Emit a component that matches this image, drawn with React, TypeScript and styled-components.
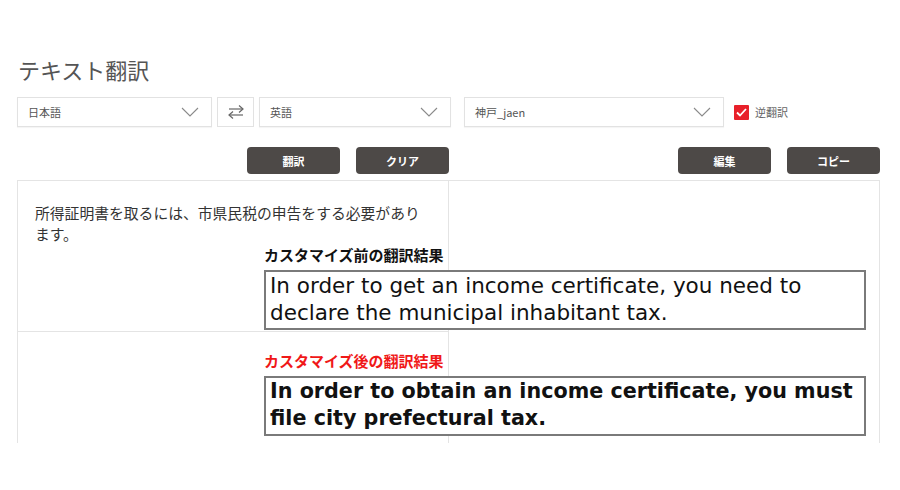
import React from 'react'
import styled, { createGlobalStyle } from 'styled-components'

const GlobalStyle = createGlobalStyle`
  body {
    margin: 0;
    background: #ffffff;
    font-family: "Noto Sans CJK JP", "Noto Sans", sans-serif;
    overflow: hidden;
  }
`

function Chevron() {
  return (
    <svg width="18" height="10" viewBox="0 0 18 10">
      <polyline points="1,1 9,9 17,1" fill="none" stroke="#8a8a8a" strokeWidth="1.1" />
    </svg>
  )
}

function SwapIcon() {
  return (
    <svg width="18" height="16" viewBox="0 0 18 16">
      <g fill="none" stroke="#666" strokeWidth="1.2">
        <line x1="2" y1="5" x2="16" y2="5" />
        <polyline points="12,1.5 16,5 12,8.5" />
        <line x1="2" y1="11" x2="16" y2="11" />
        <polyline points="6,7.5 2,11 6,14.5" />
      </g>
    </svg>
  )
}

function App() {
  return (
    <Page>
      <GlobalStyle />
      <Title>テキスト翻訳</Title>
      <Toolbar>
        <Select width={195}>
          <span>日本語</span>
          <Chevron />
        </Select>
        <SwapButton>
          <SwapIcon />
        </SwapButton>
        <Select width={192}>
          <span>英語</span>
          <Chevron />
        </Select>
        <Select width={260} spaced>
          <span>神戸_jaen</span>
          <Chevron />
        </Select>
        <CheckLabel>
          <CheckBox>
            <svg width="11" height="9" viewBox="0 0 11 9">
              <polyline points="1,4.5 4,7.5 10,1" fill="none" stroke="#fff" strokeWidth="1.8" />
            </svg>
          </CheckBox>
          逆翻訳
        </CheckLabel>
      </Toolbar>
      <ActionRow>
        <ButtonGroup>
          <ActionButton>翻訳</ActionButton>
          <ActionButton>クリア</ActionButton>
        </ButtonGroup>
        <ButtonGroup>
          <ActionButton>編集</ActionButton>
          <ActionButton>コピー</ActionButton>
        </ButtonGroup>
      </ActionRow>
      <Panel>
        <SourceColumn>
          <SourceCell>
            <SourceText>所得証明書を取るには、市県民税の申告をする必要があります。</SourceText>
          </SourceCell>
          <EmptyCell />
        </SourceColumn>
        <TargetColumn />
        <Callouts>
          <CalloutLabel>カスタマイズ前の翻訳結果</CalloutLabel>
          <CalloutBox>
            In order to get an income certificate, you need to declare the municipal inhabitant tax.
          </CalloutBox>
          <CalloutLabel red>カスタマイズ後の翻訳結果</CalloutLabel>
          <CalloutBox bold>
            In order to obtain an income certificate, you must file city prefectural tax.
          </CalloutBox>
        </Callouts>
      </Panel>
    </Page>
  )
}

const Page = styled.div`
  width: 863px;
  padding: 56px 20px 0 17px;
`

const Title = styled.h1`
  margin: 0 0 15px 1px;
  font-size: 22px;
  font-weight: 400;
  line-height: 26px;
  color: #555;
`

const Toolbar = styled.div`
  display: flex;
  align-items: center;
  gap: 5px;
  height: 30px;
`

const Select = styled.div<{ width: number; spaced?: boolean }>`
  display: flex;
  align-items: center;
  justify-content: space-between;
  box-sizing: border-box;
  width: ${(p) => p.width}px;
  height: 30px;
  padding: 0 12px 0 10px;
  margin-left: ${(p) => (p.spaced ? '8px' : '0')};
  border: 1px solid #e2e2e2;
  box-shadow: 0 1px 1px rgba(0, 0, 0, 0.04);
  font-size: 11px;
  color: #555;
`

const SwapButton = styled.div`
  display: flex;
  align-items: center;
  justify-content: center;
  box-sizing: border-box;
  width: 37px;
  height: 30px;
  border: 1px solid #e2e2e2;
`

const CheckLabel = styled.label`
  display: flex;
  align-items: center;
  gap: 6px;
  margin-left: 5px;
  font-size: 11px;
  color: #666;
`

const CheckBox = styled.span`
  display: flex;
  align-items: center;
  justify-content: center;
  width: 15px;
  height: 15px;
  background: #e8202a;
  border-radius: 1px;
`

const ActionRow = styled.div`
  display: grid;
  grid-template-columns: 432px 431px;
  margin-top: 20px;
  height: 27px;
`

const ButtonGroup = styled.div`
  display: flex;
  justify-content: flex-end;
  gap: 16px;
`

const ActionButton = styled.button`
  width: 93px;
  height: 27px;
  border: none;
  border-radius: 4px;
  background: #4d4947;
  color: #fff;
  font-family: "Noto Sans CJK JP", sans-serif;
  font-size: 11px;
  font-weight: 700;
  padding: 0;
`

const Panel = styled.div`
  position: relative;
  display: grid;
  grid-template-columns: 432px 431px;
  margin-top: 6px;
  height: 263px;
`

const SourceColumn = styled.div`
  display: flex;
  flex-direction: column;
  border-top: 1px solid #e4e4e4;
  border-left: 1px solid #e4e4e4;
  border-right: 1px solid #e4e4e4;
`

const SourceCell = styled.div`
  height: 151px;
  padding: 21px 0 0 17px;
  box-sizing: border-box;
  border-bottom: 1px solid #e4e4e4;
`

const SourceText = styled.p`
  margin: 0;
  width: 396px;
  font-size: 14.8px;
  line-height: 21px;
  color: #333;
`

const EmptyCell = styled.div`
  flex: 1;
`

const TargetColumn = styled.div`
  border-top: 1px solid #e4e4e4;
  border-right: 1px solid #e4e4e4;
`

const Callouts = styled.div`
  position: absolute;
  left: 247px;
  top: 65px;
  width: 602px;
  display: flex;
  flex-direction: column;
`

const CalloutLabel = styled.div<{ red?: boolean }>`
  font-size: 15px;
  font-weight: 700;
  line-height: 20px;
  color: ${(p) => (p.red ? '#f01818' : '#111')};
  margin-bottom: 5px;
  &:nth-of-type(3) {
    margin-top: 21px;
  }
`

const CalloutBox = styled.div<{ bold?: boolean }>`
  box-sizing: border-box;
  height: 60px;
  padding: 0 4px;
  border: 2px solid #7a7a7a;
  background: #fff;
  font-family: "DejaVu Sans", Verdana, sans-serif;
  font-size: ${(p) => (p.bold ? '20.7px' : '21.5px')};
  font-weight: ${(p) => (p.bold ? 700 : 400)};
  line-height: 27px;
  color: #111;
`

export default App
